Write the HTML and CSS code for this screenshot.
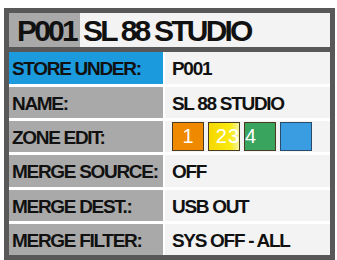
FILE: index.html
```html
<!DOCTYPE html>
<html lang="en">
<head>
    <meta charset="UTF-8">
    <meta name="viewport" content="width=device-width, initial-scale=1.0">
    <title>Store Performance</title>
    <link rel="stylesheet" href="styles.css">
</head>
<body>
    <div class="screen">
        <div class="title">
            <span class="title-id">P001</span>
            <span class="title-name">SL 88 STUDIO</span>
        </div>

        <div class="rows">
            <div class="label active">STORE UNDER:</div>
            <div class="value">P001</div>

            <div class="label">NAME:</div>
            <div class="value">SL 88 STUDIO</div>

            <div class="label">ZONE EDIT:</div>
            <div class="value">
                <div class="zones">
                    <span class="zone orange">1</span>
                    <span class="zone yellow"><i>2</i><i>3</i></span>
                    <span class="zone green"><i>4</i></span>
                    <span class="zone blue"></span>
                </div>
            </div>

            <div class="label">MERGE SOURCE:</div>
            <div class="value">OFF</div>

            <div class="label">MERGE DEST.:</div>
            <div class="value">USB OUT</div>

            <div class="label">MERGE FILTER:</div>
            <div class="value">SYS OFF - ALL</div>
        </div>
    </div>
</body>
</html>
```

FILE: styles.css
```css
*{
    margin:0;
    padding:0;
    box-sizing:border-box;
}
body{
    background:#fff;
    font-family:"Liberation Sans",Arial,sans-serif;
    font-weight:bold;
    color:#111;
}
.screen{
    width:331px;
    margin:8px 0 0 4px;
    border:5px solid #585858;
    background:#fff;
}
.title{
    display:flex;
    height:39px;
    border-bottom:5px solid #585858;
    background:#f3f3f3;
    font-size:30px;
    letter-spacing:-2.8px;
    line-height:35px;
}
.title-id{
    width:71px;
    padding-left:8px;
    background:#a9a9a9;
    white-space:nowrap;
}
.title-name{
    padding-left:3px;
    white-space:nowrap;
}
.rows{
    display:grid;
    grid-template-columns:154px 1fr;
    grid-template-rows:32px 31px 31px 32px 31px 31px;
    column-gap:2px;
    row-gap:3px;
    font-size:19px;
    letter-spacing:-1.3px;
}
.label,.value{
    display:flex;
    align-items:center;
    padding-top:2px;
    white-space:nowrap;
}
.label{
    background:#a9a9a9;
    padding-left:3px;
}
.label.active{
    background:#1b9ade;
}
.value{
    background:#f3f3f3;
    padding-left:7px;
}
.zones{
    display:flex;
    gap:4px;
    margin-top:-2px;
}
.zone{
    width:32px;
    height:29px;
    border:1px solid #4a3a20;
    color:#fff;
    display:flex;
    align-items:center;
    justify-content:center;
    font-weight:normal;
    font-size:20px;
    letter-spacing:0;
}
.zone i{
    font-style:normal;
}
.orange{
    background:#ef8a00;
}
.yellow{
    background:linear-gradient(90deg,#f5d800,#faea10 70%,#f3f3a0);
    justify-content:flex-end;
    gap:1px;
    padding-right:0;
}
.green{
    background:#38a45e;
    justify-content:flex-start;
    padding-left:0;
}
.blue{
    background:#3a9de2;
    border-color:#2a4a6a;
}
```
